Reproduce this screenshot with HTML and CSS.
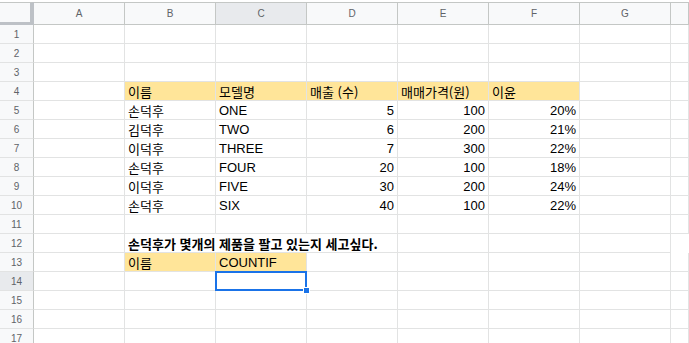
FILE: index.html
```html
<!DOCTYPE html>
<html lang="ko">
<head>
    <meta charset="UTF-8">
    <meta name="viewport" content="width=device-width, initial-scale=1.0">
    <title>COUNTIF 예제</title>
    <link rel="stylesheet" href="styles.css">
</head>
<body>

    <!-- Sheet grid -->
    <div class="sheet">

        <!-- Column headers -->
        <div class="row hdr">
            <div class="corner"></div>
            <div class="ch">A</div>
            <div class="ch">B</div>
            <div class="ch active">C</div>
            <div class="ch">D</div>
            <div class="ch">E</div>
            <div class="ch">F</div>
            <div class="ch">G</div>
            <div class="ch"></div>
        </div>

        <div class="row"><div class="rh">1</div><div></div><div></div><div></div><div></div><div></div><div></div><div></div><div></div></div>
        <div class="row"><div class="rh">2</div><div></div><div></div><div></div><div></div><div></div><div></div><div></div><div></div></div>
        <div class="row"><div class="rh">3</div><div></div><div></div><div></div><div></div><div></div><div></div><div></div><div></div></div>

        <!-- Table head -->
        <div class="row">
            <div class="rh">4</div>
            <div></div>
            <div class="fill ko">이름</div>
            <div class="fill ko">모델명</div>
            <div class="fill ko">매출 (수)</div>
            <div class="fill ko">매매가격(원)</div>
            <div class="fill ko">이윤</div>
            <div></div>
            <div></div>
        </div>

        <div class="row">
            <div class="rh">5</div><div></div>
            <div class="ko">손덕후</div><div>ONE</div>
            <div class="num">5</div><div class="num">100</div><div class="num">20%</div>
            <div></div><div></div>
        </div>
        <div class="row">
            <div class="rh">6</div><div></div>
            <div class="ko">김덕후</div><div>TWO</div>
            <div class="num">6</div><div class="num">200</div><div class="num">21%</div>
            <div></div><div></div>
        </div>
        <div class="row">
            <div class="rh">7</div><div></div>
            <div class="ko">이덕후</div><div>THREE</div>
            <div class="num">7</div><div class="num">300</div><div class="num">22%</div>
            <div></div><div></div>
        </div>
        <div class="row">
            <div class="rh">8</div><div></div>
            <div class="ko">손덕후</div><div>FOUR</div>
            <div class="num">20</div><div class="num">100</div><div class="num">18%</div>
            <div></div><div></div>
        </div>
        <div class="row">
            <div class="rh">9</div><div></div>
            <div class="ko">이덕후</div><div>FIVE</div>
            <div class="num">30</div><div class="num">200</div><div class="num">24%</div>
            <div></div><div></div>
        </div>
        <div class="row">
            <div class="rh">10</div><div></div>
            <div class="ko">손덕후</div><div>SIX</div>
            <div class="num">40</div><div class="num">100</div><div class="num">22%</div>
            <div></div><div></div>
        </div>

        <div class="row"><div class="rh">11</div><div></div><div></div><div></div><div></div><div></div><div></div><div></div><div></div></div>

        <!-- Question -->
        <div class="row">
            <div class="rh">12</div><div></div>
            <div class="ko span3 question">손덕후가 몇개의 제품을 팔고 있는지 세고싶다.</div>
            <div></div><div></div><div></div>
        </div>

        <div class="row">
            <div class="rh">13</div><div></div>
            <div class="fill ko">이름</div>
            <div class="fill">COUNTIF</div>
            <div></div><div></div><div></div><div></div><div></div>
        </div>

        <div class="row">
            <div class="rh active">14</div><div></div><div></div>
            <div class="selected"><span class="handle"></span></div>
            <div></div><div></div><div></div><div></div><div></div>
        </div>

        <div class="row"><div class="rh">15</div><div></div><div></div><div></div><div></div><div></div><div></div><div></div><div></div></div>
        <div class="row"><div class="rh">16</div><div></div><div></div><div></div><div></div><div></div><div></div><div></div><div></div></div>
        <div class="row"><div class="rh">17</div><div></div><div></div><div></div><div></div><div></div><div></div><div></div><div></div></div>
    </div>

</body>
</html>
```

FILE: styles.css
```css
/* ===== General ===== */
body {
    margin: 0;
    background: #ffffff;
    overflow: hidden;
    font-family: "Liberation Sans", Arial, "Noto Sans CJK KR", sans-serif;
    font-size: 13px;
    color: #000000;
}

.sheet {
    padding-top: 2px;
}

/* ===== Rows & cells ===== */
.row {
    display: grid;
    grid-template-columns: 34px repeat(7, 91px) 18px;
    height: 19px;
}

.row > div {
    box-sizing: border-box;
    border-right: 1px solid #e2e3e3;
    border-bottom: 1px solid #e2e3e3;
    display: flex;
    align-items: flex-end;
    padding: 0 3px 1px;
    line-height: 15px;
    white-space: nowrap;
    min-width: 0;
}

.ko {
    font-family: "Noto Sans CJK KR", "Liberation Sans", sans-serif;
    font-size: 13px;
}

.question {
    font-weight: 700;
}

.num {
    justify-content: flex-end;
}

.fill {
    background: #ffe599;
}

.span3 {
    grid-column: span 3;
}

/* ===== Headers ===== */
.hdr {
    height: 23px;
}

.hdr > div {
    border-top: 1px solid #c4c7c5;
    border-bottom-color: #c4c7c5;
    border-right-color: #c4c7c5;
    background: #f8f9fa;
    align-items: center;
    justify-content: center;
    padding: 0;
}

.ch,
.rh {
    font-size: 10px;
    color: #5f6368;
}

.row > .rh {
    background: #f8f9fa;
    border-right-color: #c4c7c5;
    justify-content: center;
    align-items: center;
    padding: 0;
}

.hdr > .corner {
    border-right: 4px solid #bdc1c6;
    border-bottom: 3px solid #bdc1c6;
}

.row > .active,
.hdr > .active {
    background: #e8eaed;
}

/* ===== Selection ===== */
.selected {
    position: relative;
}

.selected::before {
    content: "";
    position: absolute;
    left: -1px;
    top: -1px;
    right: -1px;
    bottom: -1px;
    border: 2px solid #1a73e8;
}

.handle {
    position: absolute;
    right: -4px;
    bottom: -4px;
    width: 5px;
    height: 5px;
    background: #1a73e8;
    border: 1px solid #ffffff;
}
```
